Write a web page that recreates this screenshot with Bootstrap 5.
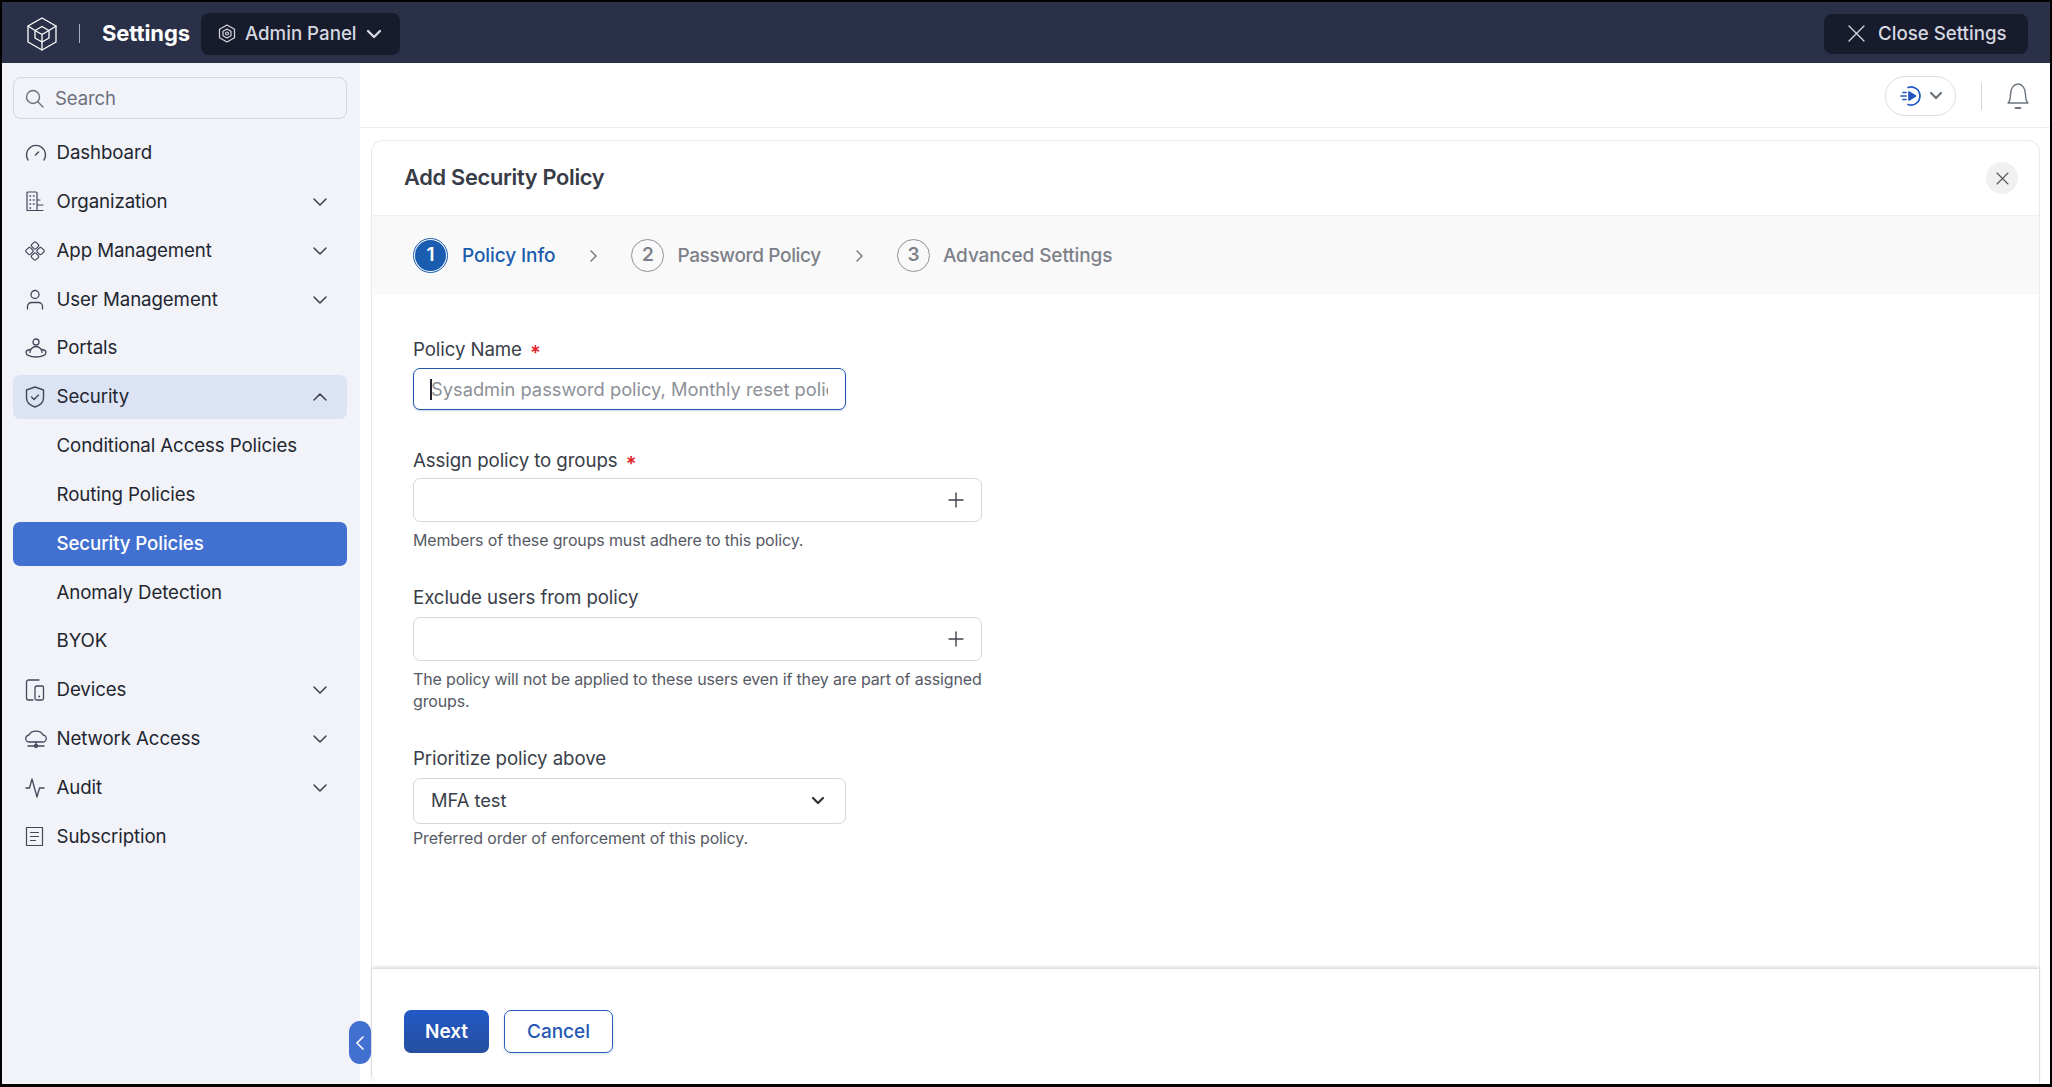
<!DOCTYPE html>
<html lang="en">
<head>
  <meta charset="UTF-8" />
  <meta name="viewport" content="width=device-width, initial-scale=1.0" />
  <title>Add Security Policy</title>
  <link href="https://cdn.jsdelivr.net/npm/bootstrap@5.3.0/dist/css/bootstrap.min.css" rel="stylesheet" />
  <style>
    html, body { height: 100%; }
    body { background: #000; padding: 2px 2px 3px 2px; font-family: Inter, "Liberation Sans", sans-serif; color: #23262f; overflow: hidden; letter-spacing: -.1px; }
    svg { display: block; flex: none; fill: none; stroke: currentColor; stroke-linecap: round; stroke-linejoin: round; }
    .app-shell { height: 100%; background: #fff; position: relative; }

    /* top bar */
    .top-strip { height: 61px; background: #2a3047; color: #fff; padding: 2px 22px 0 25px; flex: none; }
    .strip-sep { width: 1px; height: 19px; background: #a9adbb; margin: 0 22px 0 22px; }
    .strip-title { font-size: 22px; font-weight: 700; margin-right: 11px; }
    .dark-pill { background: #171b2b; color: #d5d8e0; border: 0; border-radius: 8px; font-size: 18.7px; font-weight: 500; height: 42px; }
    .dark-pill span { padding-top: 2px; }
    .panel-pill { width: 199px; padding: 0 0 0 17px; gap: 9px; }
    .close-pill { width: 204px; height: 40px; padding: 0 0 0 24px; gap: 13px; }

    /* side menu */
    .side-menu { width: 358px; background: #f1f3f9; padding: 14px 13px 12px 11px; flex: none; }
    .side-search { height: 42px; border: 1.5px solid #d3d6df; border-radius: 8px; padding: 0 11px; gap: 11px; color: #6c707c; font-size: 18.5px; margin-bottom: 12px; }
    .side-search span { padding-top: 2px; }
    .menu-row { height: 44px; border-radius: 7px; padding: 0 20px 0 12px; margin-bottom: 4.85px; font-size: 18.7px; color: #23262f; text-decoration: none; }
    .menu-ico { width: 22px; margin-right: 9.5px; color: #43475a; }
    .menu-row .menu-text { flex: 1; }
    .menu-sub { padding-left: 43.5px; }
    .menu-open { background: #dbe3f5; }
    .menu-current { background: #4270d0; color: #fff; font-weight: 500; }
    .menu-caret { color: #3b3f4d; }
    .side-toggle { position: absolute; left: 347px; top: 1019px; width: 22px; height: 43px; border-radius: 11px; background: #4270d0; color: #fff; z-index: 5; }

    /* main */
    .main-area { min-width: 0; }
    .util-bar { height: 65px; border-bottom: 1px solid #eceef3; padding: 2px 20px 0 0; flex: none; }
    .play-pill { width: 71px; height: 40px; border: 1.5px solid #dcdee5; border-radius: 20px; gap: 7px; color: #2458c0; }
    .util-sep { width: 1px; height: 27px; background: #d3d5dc; margin: 0 24px 0 25px; }
    .sheet { margin: 12px 10px 0 11px; border: 1px solid #e8eaf3; border-bottom: 0; border-radius: 12px 12px 0 12px; min-height: 0; }
    .sheet-head { height: 75px; padding: 0 21px 0 32px; flex: none; border-bottom: 1px solid #f0f0f2; }
    .sheet-title { font-size: 21.8px; font-weight: 600; color: #383c47; margin: 0 0 2px 0; letter-spacing: -.3px; }
    .round-close { width: 32px; height: 32px; border-radius: 50%; background: #f0f0f0; border: 0; padding: 0; color: #555; }
    .step-strip { height: 79px; background: #f9f9f9; padding-left: 43px; flex: none; font-size: 19px; color: #7d8089; font-weight: 500; }
    .step-item { padding-top: 0; }
    .step-name { padding-top: 2px; }
    .step-tight { letter-spacing: -.35px; }
    .step-dot { width: 33px; height: 33px; border-radius: 50%; border: 1.5px solid #8f9199; font-size: 19px; font-weight: 600; margin-right: 13px; }
    .step-on { color: #1a5cb0; }
    .step-on .step-dot { width: 31px; height: 31px; background: #1a5cb0; color: #fff; border: 0; outline: 1.5px solid #1a5cb0; outline-offset: 1px; margin-right: 16px; }
    .step-arrow { color: #70737c; margin: 0 34px 0 35px; }

    .form-wrap { padding: 43px 40px 0 41px; overflow: hidden; }
    .field-label { display: block; font-size: 18.7px; color: #3a3e49; margin-bottom: 0; line-height: 24px; }
    .req-star { color: #e0222b; font-size: 20px; line-height: 0; vertical-align: -4px; margin-left: 3px; font-weight: 600; }
    .field-input.form-control, .field-input.form-select { height: 42px; border: 1.5px solid #d6d7dc; border-radius: 7px; font-size: 18.3px; padding: 0 17px; color: #3a3e49; box-shadow: none; }
    .field-short { width: 433px; }
    .field-wide { width: 569px; height: 44px; border: 1.5px solid #d6d7dc; border-radius: 7px; padding-right: 17px; color: #3f424d; }
    .field-focus.form-control { border-color: #2458a8; box-shadow: 0 1px 2px rgba(36,88,168,.25); }
    .field-focus::placeholder { color: #8d9098; opacity: 1; }
    .caret-box { position: relative; margin-top: 6px; }
    .caret-bar { position: absolute; left: 17px; top: 11px; width: 2px; height: 21px; background: #23262f; }
    .field-input.form-select { padding-right: 30px; height: 46px; margin-top: 7px; background-image: url("data:image/svg+xml,%3csvg xmlns='http://www.w3.org/2000/svg' viewBox='0 0 14 10'%3e%3cpath fill='none' stroke='%23333' stroke-linecap='round' stroke-linejoin='round' stroke-width='2.2' d='m2 2 5 5 5-5'/%3e%3c/svg%3e"); background-size: 14px 10px; background-position: right 20px center; }
    .group-gap { margin-top: 39px; }
    .next-gap { margin-top: 35px; }
    .wide-assign { margin-top: 5px; }
    .wide-exclude { margin-top: 7px; }
    .help-line { font-size: 16px; line-height: 22px; color: #565a65; margin: 7px 0 0 0; width: 569px; letter-spacing: -.15px; }
    .help-near { margin-top: 3px; }
    .sheet-foot { height: 115px; flex: none; padding: 10px 32px 0 32px; gap: 15px; box-shadow: 0 -2px 3px rgba(0,0,0,.15); position: relative; }
    .btn-next, .btn-next:hover { width: 85px; height: 43px; background: linear-gradient(#2159c6, #264f9f); border: 0; color: #fff; font-size: 19px; font-weight: 600; border-radius: 7px; padding: 2px 0 0 0; }
    .btn-cancel, .btn-cancel:hover { width: 109px; height: 43px; background: #fff; border: 1.5px solid #2b5cb8; color: #2458b4; font-size: 19px; font-weight: 500; border-radius: 7px; padding: 2px 0 0 0; box-shadow: 0 1px 3px rgba(43,92,184,.2); }
  </style>
</head>
<body>
<div class="app-shell d-flex flex-column">

  <!-- top bar -->
  <header class="top-strip d-flex align-items-center">
    <svg width="30" height="34" viewBox="0 0 30 34" stroke-width="1.3"><path d="M15 1 29 9v16l-14 8-14-8V9z"/><path d="M15 9.500 22 13.500V21L15 25 8 21V13.500z"/><path d="M8 13.500 15 17.500 22 13.500M15 17.500V25M1 9 8 13.500M29 9 22 13.500M15 25V33"/></svg>
    <span class="strip-sep"></span>
    <span class="strip-title">Settings</span>
    <button class="dark-pill panel-pill d-flex align-items-center" type="button">
      <svg width="18" height="19" viewBox="0 0 18 19" stroke-width="1.2"><path d="M9 1 16.500 5.200v8.600L9 18 1.500 13.800V5.200z"/><path d="M9 5 13 7.200v4.600L9 14 5 11.800V7.200z"/><circle cx="9" cy="9.500" r="1.500"/></svg>
      <span>Admin Panel</span>
      <svg width="16" height="10" viewBox="0 0 16 10" stroke-width="2.4"><path d="m2 2 6 6 6-6"/></svg>
    </button>
    <button class="dark-pill close-pill d-flex align-items-center ms-auto" type="button">
      <svg width="17" height="17" viewBox="0 0 17 17" stroke-width="1.3"><path d="m1 1 15 15M16 1 1 16"/></svg>
      <span>Close Settings</span>
    </button>
  </header>

  <div class="d-flex flex-grow-1" style="min-height:0">
    <!-- side menu -->
    <nav class="side-menu">
      <div class="side-search d-flex align-items-center">
        <svg width="19" height="19" viewBox="0 0 19 19" stroke-width="1.4"><circle cx="8" cy="8" r="6.500"/><path d="m13 13 5 5"/></svg>
        <span>Search</span>
      </div>

      <a class="menu-row d-flex align-items-center" href="#">
        <span class="menu-ico"><svg width="22" height="18" viewBox="0 0 22 18" stroke-width="1.400"><path d="M3 16A9.500 9.500 0 1 1 19 16"/><path d="m10.500 11 3-3"/></svg></span>
        <span class="menu-text">Dashboard</span>
      </a>
      <a class="menu-row d-flex align-items-center" href="#">
        <span class="menu-ico"><svg width="20" height="21" viewBox="0 0 20 21" stroke-width="1.200"><path d="M12 19.500H2V2a1 1 0 0 1 1-1h8a1 1 0 0 1 1 1zM12 9h3M12 14h6M12 19.500h6"/><path d="M5 5h.5M8.500 5H9M5 9h.5M8.500 9H9M5 13h.5M8.500 13H9M5 17h.5" stroke-width="1.600"/></svg></span>
        <span class="menu-text">Organization</span>
        <svg class="menu-caret" width="14" height="8" viewBox="0 0 14 8" stroke-width="1.500"><path d="m1 1 6 6 6-6"/></svg>
      </a>
      <a class="menu-row d-flex align-items-center" href="#">
        <span class="menu-ico"><svg width="20" height="20" viewBox="0 0 20 20" stroke-width="1.200"><rect x="7" y="1.500" width="6" height="6" rx="1.500" transform="rotate(45 10 4.500)"/><rect x="7" y="12.500" width="6" height="6" rx="1.500" transform="rotate(45 10 15.500)"/><rect x="1.500" y="7" width="6" height="6" rx="1.500" transform="rotate(45 4.500 10)"/><rect x="12.500" y="7" width="6" height="6" rx="1.500" transform="rotate(45 15.500 10)"/></svg></span>
        <span class="menu-text">App Management</span>
        <svg class="menu-caret" width="14" height="8" viewBox="0 0 14 8" stroke-width="1.500"><path d="m1 1 6 6 6-6"/></svg>
      </a>
      <a class="menu-row d-flex align-items-center" href="#">
        <span class="menu-ico"><svg width="20" height="21" viewBox="0 0 20 21" stroke-width="1.300"><circle cx="10" cy="5.500" r="4"/><path d="M2.500 20v-2.500a4 4 0 0 1 4-4h7a4 4 0 0 1 4 4V20"/></svg></span>
        <span class="menu-text">User Management</span>
        <svg class="menu-caret" width="14" height="8" viewBox="0 0 14 8" stroke-width="1.500"><path d="m1 1 6 6 6-6"/></svg>
      </a>
      <a class="menu-row d-flex align-items-center" href="#">
        <span class="menu-ico"><svg width="22" height="20" viewBox="0 0 22 20" stroke-width="1.300"><circle cx="11" cy="4" r="3"/><path d="M5 14.500a6 6 0 0 1 12 0"/><path d="M5 11.500C2.500 12 1 13.200 1 14.500 1 17 5 19 11 19s10-2 10-4.500c0-1.300-1.500-2.500-4-3"/></svg></span>
        <span class="menu-text">Portals</span>
      </a>
      <a class="menu-row menu-open d-flex align-items-center" href="#">
        <span class="menu-ico"><svg width="20" height="22" viewBox="0 0 20 22" stroke-width="1.400"><path d="M10 1 18.500 4v8c0 4.500-4 7.500-8.500 9-4.500-1.500-8.500-4.500-8.500-9V4z"/><path d="m6.500 11 2.500 2.500 4.500-4.500"/></svg></span>
        <span class="menu-text">Security</span>
        <svg class="menu-caret" width="14" height="8" viewBox="0 0 14 8" stroke-width="1.500"><path d="m1 7 6-6 6 6"/></svg>
      </a>
      <a class="menu-row menu-sub d-flex align-items-center" href="#">Conditional Access Policies</a>
      <a class="menu-row menu-sub d-flex align-items-center" href="#">Routing Policies</a>
      <a class="menu-row menu-sub menu-current d-flex align-items-center" href="#">Security Policies</a>
      <a class="menu-row menu-sub d-flex align-items-center" href="#">Anomaly Detection</a>
      <a class="menu-row menu-sub d-flex align-items-center" href="#">BYOK</a>
      <a class="menu-row d-flex align-items-center" href="#">
        <span class="menu-ico"><svg width="20" height="22" viewBox="0 0 20 22" stroke-width="1.300"><path d="M14 1H3.500A2 2 0 0 0 1.500 3v16a2 2 0 0 0 2 2H8"/><rect x="10" y="7" width="8.500" height="14" rx="1.500"/><path d="M14.200 17.500h.1" stroke-width="1.800"/></svg></span>
        <span class="menu-text">Devices</span>
        <svg class="menu-caret" width="14" height="8" viewBox="0 0 14 8" stroke-width="1.500"><path d="m1 1 6 6 6-6"/></svg>
      </a>
      <a class="menu-row d-flex align-items-center" href="#">
        <span class="menu-ico"><svg width="22" height="20" viewBox="0 0 22 20" stroke-width="1.300"><path d="M5 13H4.500a3.500 3.500 0 0 1-.5-7 7.500 6 0 0 1 14 0 3.500 3.500 0 0 1-.5 7z"/><path d="M11 13v4M3 17h16"/><circle cx="11" cy="17" r="1.500"/></svg></span>
        <span class="menu-text">Network Access</span>
        <svg class="menu-caret" width="14" height="8" viewBox="0 0 14 8" stroke-width="1.500"><path d="m1 1 6 6 6-6"/></svg>
      </a>
      <a class="menu-row d-flex align-items-center" href="#">
        <span class="menu-ico"><svg width="20" height="20" viewBox="0 0 20 20" stroke-width="1.300"><path d="M1 10h3.500L7 1l5 18 2.500-9H19"/></svg></span>
        <span class="menu-text">Audit</span>
        <svg class="menu-caret" width="14" height="8" viewBox="0 0 14 8" stroke-width="1.500"><path d="m1 1 6 6 6-6"/></svg>
      </a>
      <a class="menu-row d-flex align-items-center" href="#">
        <span class="menu-ico"><svg width="19" height="21" viewBox="0 0 19 21" stroke-width="1.200"><rect x="1.500" y="1.500" width="16" height="18"/><path d="M5.500 6.500h8M5.500 10.500h8M5.500 14.500h5"/></svg></span>
        <span class="menu-text">Subscription</span>
      </a>
    </nav>

    <!-- main -->
    <main class="main-area flex-grow-1 d-flex flex-column">
      <div class="util-bar d-flex align-items-center justify-content-end">
        <div class="play-pill d-flex align-items-center justify-content-center">
          <svg width="23" height="22" viewBox="0 0 23 22" stroke-width="1.700"><path d="M8 2.500A9 9 0 1 1 8 19.500"/><path d="M9 7v8l6.500-4z" fill="currentColor"/><path d="M3 7.500h3M1 11h5M3 14.500h3"/></svg>
          <svg class="text-secondary" width="12" height="8" viewBox="0 0 12 8" stroke-width="2.200"><path d="m1 1 5 5 5-5"/></svg>
        </div>
        <span class="util-sep"></span>
        <svg class="text-secondary" width="24" height="28" viewBox="0 0 24 28" stroke-width="1.400"><path d="M2 21c2-2 2.500-4 2.500-8.500C4.500 6 8 2 12 2s7.500 4 7.500 10.500c0 4.500.5 6.500 2.500 8.500z"/><path d="M9.500 26h5" stroke-width="1.800"/></svg>
      </div>

      <section class="sheet flex-grow-1 d-flex flex-column">
        <div class="sheet-head d-flex align-items-center justify-content-between">
          <h1 class="sheet-title">Add Security Policy</h1>
          <button class="round-close d-flex align-items-center justify-content-center" type="button" aria-label="Close">
            <svg width="13" height="13" viewBox="0 0 13 13" stroke-width="1.100"><path d="m1 1 11 11M12 1 1 12"/></svg>
          </button>
        </div>

        <div class="step-strip d-flex align-items-center">
          <div class="step-on d-flex align-items-center">
            <span class="step-dot d-flex align-items-center justify-content-center">1</span><span class="step-name">Policy Info</span>
          </div>
          <svg class="step-arrow" width="7" height="12" viewBox="0 0 7 12" stroke-width="1.400"><path d="m1 1 5 5-5 5"/></svg>
          <div class="d-flex align-items-center">
            <span class="step-dot d-flex align-items-center justify-content-center">2</span><span class="step-name step-tight">Password Policy</span>
          </div>
          <svg class="step-arrow" width="7" height="12" viewBox="0 0 7 12" stroke-width="1.400"><path d="m1 1 5 5-5 5"/></svg>
          <div class="d-flex align-items-center">
            <span class="step-dot d-flex align-items-center justify-content-center">3</span><span class="step-name">Advanced Settings</span>
          </div>
        </div>

        <form class="form-wrap flex-grow-1">
          <label class="field-label" for="policyName">Policy Name <span class="req-star">*</span></label>
          <div class="caret-box field-short">
            <input class="form-control field-input field-focus" id="policyName" type="text" placeholder="Sysadmin password policy, Monthly reset policy">
            <span class="caret-bar"></span>
          </div>

          <label class="field-label group-gap">Assign policy to groups <span class="req-star">*</span></label>
          <div class="field-wide wide-assign d-flex align-items-center justify-content-end">
            <svg width="16" height="16" viewBox="0 0 16 16" stroke-width="1.400"><path d="M8 1v14M1 8h14"/></svg>
          </div>
          <p class="help-line">Members of these groups must adhere to this policy.</p>

          <label class="field-label next-gap">Exclude users from policy</label>
          <div class="field-wide wide-exclude d-flex align-items-center justify-content-end">
            <svg width="16" height="16" viewBox="0 0 16 16" stroke-width="1.400"><path d="M8 1v14M1 8h14"/></svg>
          </div>
          <p class="help-line">The policy will not be applied to these users even if they are part of assigned groups.</p>

          <label class="field-label next-gap" for="priority">Prioritize policy above</label>
          <select class="form-select field-input field-short" id="priority">
            <option>MFA test</option>
          </select>
          <p class="help-line help-near">Preferred order of enforcement of this policy.</p>
        </form>

        <div class="sheet-foot d-flex align-items-center">
          <button class="btn btn-next" type="button">Next</button>
          <button class="btn btn-cancel" type="button">Cancel</button>
        </div>
      </section>
    </main>
  </div>

  <button class="side-toggle d-flex align-items-center justify-content-center border-0 p-0" type="button" aria-label="Collapse">
    <svg width="8" height="14" viewBox="0 0 8 14" stroke-width="1.600"><path d="M7 1 1 7l6 6"/></svg>
  </button>
</div>
<script src="https://cdn.jsdelivr.net/npm/bootstrap@5.3.0/dist/js/bootstrap.bundle.min.js"></script>
</body>
</html>
